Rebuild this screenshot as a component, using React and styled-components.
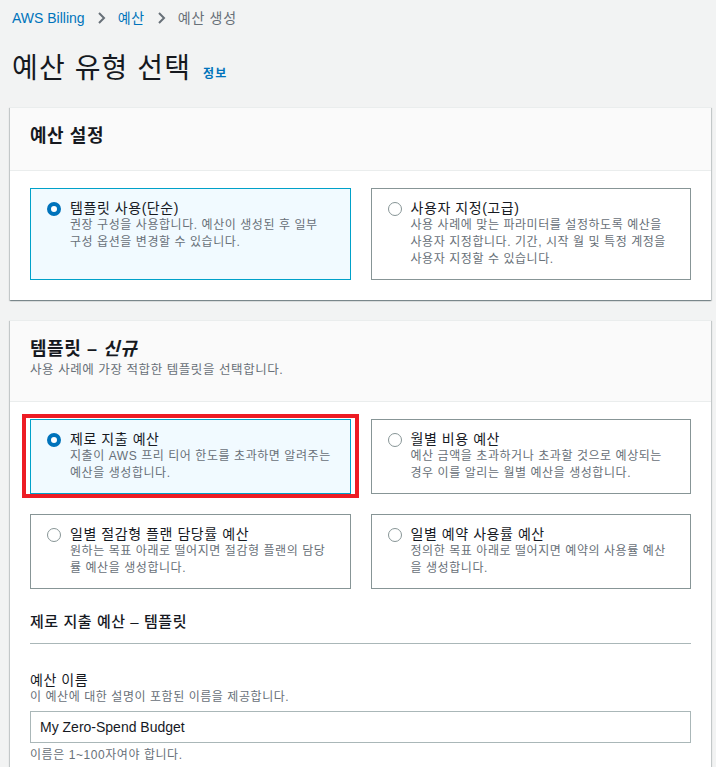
import styled, { createGlobalStyle } from "styled-components";

const GlobalStyle = createGlobalStyle`
  * { box-sizing: border-box; }
  body {
    margin: 0;
    background: #f2f3f3;
    font-family: "Liberation Sans", "Noto Sans CJK KR", sans-serif;
    color: #16191f;
    letter-spacing: 0.035em;
    word-break: keep-all;
  }
`

const Page = styled.div`
  padding: 8px 5px 40px 10px;
`

const Breadcrumbs = styled.nav`
  display: flex;
  align-items: center;
  gap: 12px;
  padding-left: 2px;
  font-size: 14px;
  line-height: 20px;
`

const Crumb = styled.a`
  color: ${(p) => (p.$current ? "#687078" : "#0073bb")};
  letter-spacing: ${(p) => (p.$latin ? "0" : "0.05em")};
  text-decoration: none;
`

const Title = styled.h1`
  display: flex;
  align-items: baseline;
  gap: 12px;
  margin: 23px 0 15px 2px;
  font-size: 28px;
  line-height: 36px;
  font-weight: 400;
  letter-spacing: 0.04em;
  color: #16191f;
`

const InfoLink = styled.a`
  font-size: 12px;
  font-weight: 700;
  color: #0073bb;
  text-decoration: none;
`

const Panel = styled.section`
  background: #fff;
  border-top: 1px solid #eaeded;
  box-shadow: 0 1px 1px 0 rgba(0, 28, 36, 0.3), 1px 1px 1px 0 rgba(0, 28, 36, 0.15),
    -1px 1px 1px 0 rgba(0, 28, 36, 0.15);
  margin-bottom: 20px;
`

const PanelHeader = styled.header`
  background: #fafafa;
  border-bottom: 1px solid #eaeded;
  padding: 16px 20px 22px;

  & > h2 {
    margin: 0;
    font-size: 18px;
    line-height: 24px;
    font-weight: 700;
  }

  & > p {
    margin: 1px 0 0;
    font-size: 12.5px;
    line-height: 17px;
    color: #687078;
  }
`

const PanelBody = styled.div`
  padding: 17px 20px 20px;
`

const CardGrid = styled.div`
  display: grid;
  grid-template-columns: 1fr 1fr;
  gap: 20px;
`

const Card = styled.label`
  position: relative;
  display: flex;
  gap: 9px;
  padding: 11px 14px 11px 16px;
  border: 1px solid ${(p) => (p.$selected ? "#00a1c9" : "#879596")};
  background: ${(p) => (p.$selected ? "#f1faff" : "#fff")};
  word-break: ${(p) => (p.$breakWords ? "normal" : "keep-all")};
  cursor: pointer;

  ${(p) =>
    p.$highlighted &&
    `
    &::after {
      content: "";
      position: absolute;
      top: -6px;
      bottom: -5px;
      left: -9px;
      right: -9px;
      border: 4px solid #ed1c24;
      pointer-events: none;
    }
  `}
`

const Radio = styled.span`
  flex: none;
  width: 14px;
  height: 14px;
  margin-top: 2px;
  border-radius: 50%;
  background: #fff;
  border: ${(p) => (p.$checked ? "4px solid #0073bb" : "1px solid #879596")};
`

const CardText = styled.div`
  display: flex;
  flex-direction: column;
`

const CardTitle = styled.span`
  font-size: 14px;
  line-height: 17px;
  color: #16191f;
`

const CardDesc = styled.span`
  font-size: 12px;
  line-height: 17px;
  color: #687078;
`

const SectionHeading = styled.h3`
  margin: 22px 0 0;
  padding-bottom: 10px;
  border-bottom: 1px solid #aab7b8;
  font-size: 15px;
  line-height: 22px;
  font-weight: 500;
`

const Field = styled.div`
  display: flex;
  flex-direction: column;
  margin-top: 27px;
`

const FieldLabel = styled.label`
  font-size: 14px;
  line-height: 18px;
  color: #16191f;
`

const FieldDesc = styled.span`
  font-size: 12px;
  line-height: 16px;
  color: #687078;
`

const TextInput = styled.input`
  margin-top: 6px;
  height: 32px;
  padding: 0 9px;
  border: 1px solid #aab7b8;
  font-family: inherit;
  font-size: 14px;
  letter-spacing: 0;
  color: #16191f;
  background: #fff;
  outline: none;
`

const FieldHint = styled.span`
  margin-top: 4px;
  font-size: 12px;
  line-height: 16px;
  color: #687078;
`

const Chevron = () => (
  <svg width="9" height="14" viewBox="0 0 9 14">
    <polyline points="2,2 7,7 2,12" fill="none" stroke="#687078" strokeWidth="2" />
  </svg>
)

const OptionCard = ({ title, desc, selected, highlighted, breakWords }) => (
  <Card $selected={selected} $highlighted={highlighted} $breakWords={breakWords}>
    <Radio $checked={selected} />
    <CardText>
      <CardTitle>{title}</CardTitle>
      <CardDesc>{desc}</CardDesc>
    </CardText>
  </Card>
)

const templates = [
  {
    title: "제로 지출 예산",
    desc: "지출이 AWS 프리 티어 한도를 초과하면 알려주는 예산을 생성합니다.",
    selected: true,
    highlighted: true,
  },
  {
    title: "월별 비용 예산",
    desc: "예산 금액을 초과하거나 초과할 것으로 예상되는 경우 이를 알리는 월별 예산을 생성합니다.",
  },
  {
    title: "일별 절감형 플랜 담당률 예산",
    desc: "원하는 목표 아래로 떨어지면 절감형 플랜의 담당률 예산을 생성합니다.",
    breakWords: true,
  },
  {
    title: "일별 예약 사용률 예산",
    desc: "정의한 목표 아래로 떨어지면 예약의 사용률 예산을 생성합니다.",
    breakWords: true,
  },
]

const App = () => {
  return (
    <Page>
      <GlobalStyle />
      <Breadcrumbs>
        <Crumb href="#" $latin>AWS Billing</Crumb>
        <Chevron />
        <Crumb href="#">예산</Crumb>
        <Chevron />
        <Crumb $current>예산 생성</Crumb>
      </Breadcrumbs>

      <Title>
        예산 유형 선택
        <InfoLink href="#">정보</InfoLink>
      </Title>

      <Panel>
        <PanelHeader>
          <h2>예산 설정</h2>
        </PanelHeader>
        <PanelBody>
          <CardGrid>
            <OptionCard
              title="템플릿 사용(단순)"
              desc="권장 구성을 사용합니다. 예산이 생성된 후 일부 구성 옵션을 변경할 수 있습니다."
              selected
            />
            <OptionCard
              title="사용자 지정(고급)"
              desc="사용 사례에 맞는 파라미터를 설정하도록 예산을 사용자 지정합니다. 기간, 시작 월 및 특정 계정을 사용자 지정할 수 있습니다."
            />
          </CardGrid>
        </PanelBody>
      </Panel>

      <Panel>
        <PanelHeader>
          <h2>
            템플릿 – <i>신규</i>
          </h2>
          <p>사용 사례에 가장 적합한 템플릿을 선택합니다.</p>
        </PanelHeader>
        <PanelBody>
          <CardGrid>
            {templates.map((t) => (
              <OptionCard key={t.title} {...t} />
            ))}
          </CardGrid>

          <SectionHeading>제로 지출 예산 – 템플릿</SectionHeading>

          <Field>
            <FieldLabel>예산 이름</FieldLabel>
            <FieldDesc>이 예산에 대한 설명이 포함된 이름을 제공합니다.</FieldDesc>
            <TextInput defaultValue="My Zero-Spend Budget" />
            <FieldHint>이름은 1~100자여야 합니다.</FieldHint>
          </Field>
        </PanelBody>
      </Panel>
    </Page>
  );
};

export default App;
